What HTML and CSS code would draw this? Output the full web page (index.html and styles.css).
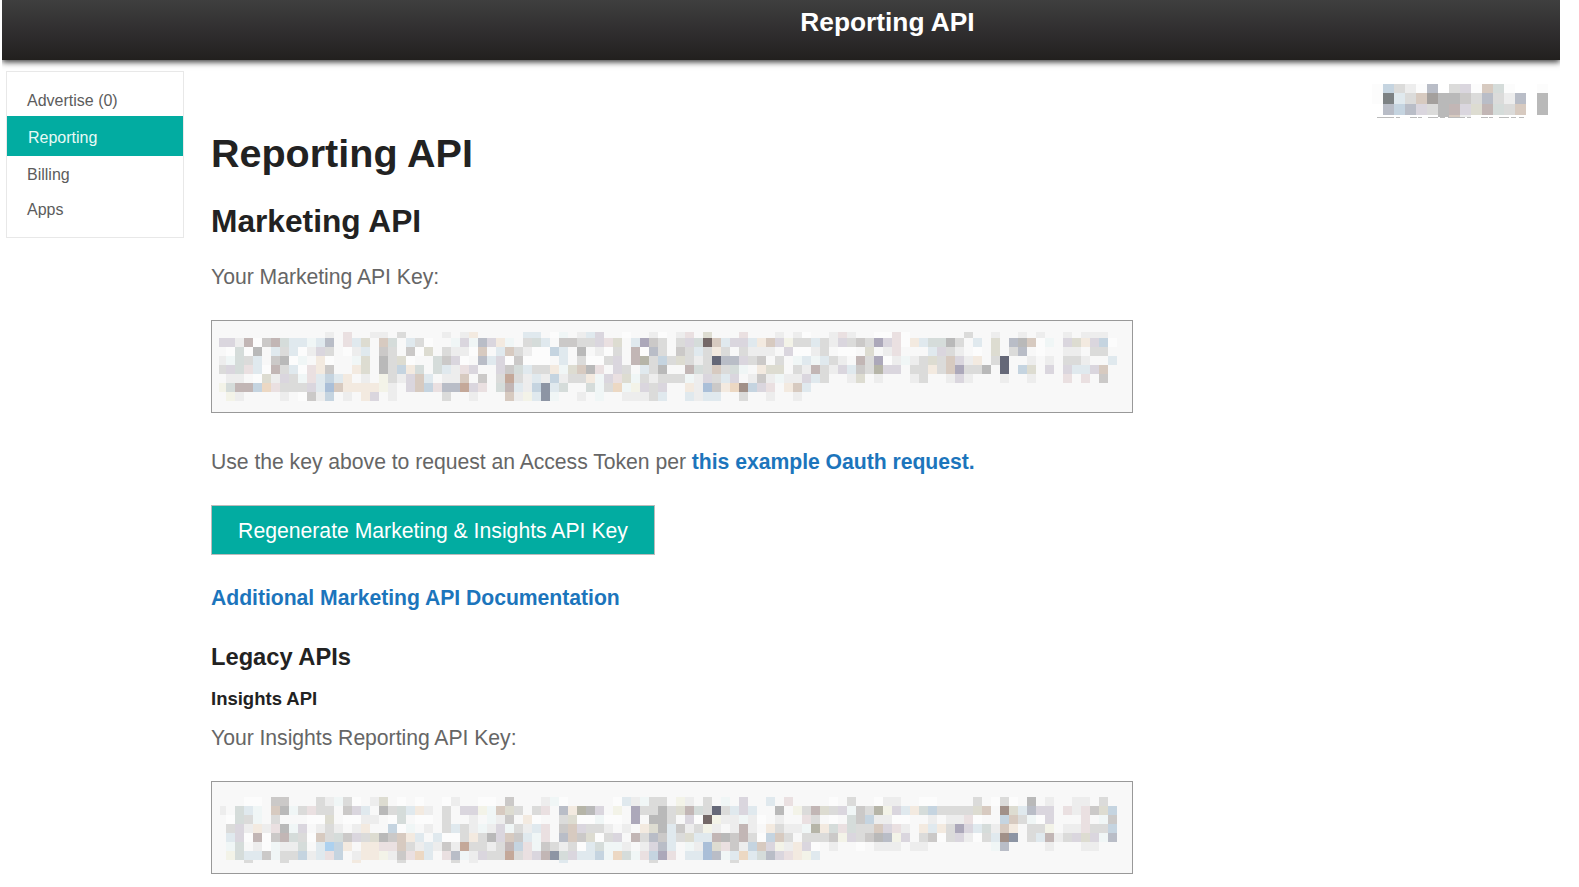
FILE: index.html
```html
<!DOCTYPE html>
<html lang="en">
<head>
<meta charset="utf-8">
<title>Reporting API</title>
<link rel="stylesheet" href="styles.css">
</head>
<body>
<header class="topbar"><span class="topbar-title">Reporting API</span></header>
<div class="page">
  <nav class="sidebar">
    <a class="nav-item">Advertise (0)</a>
    <a class="nav-item active">Reporting</a>
    <a class="nav-item">Billing</a>
    <a class="nav-item">Apps</a>
  </nav>
  <main class="content">
    <h1 class="title">Reporting API</h1>
    <h2 class="section">Marketing API</h2>
    <p class="text key-label">Your Marketing API Key:</p>
    <div class="key-box"><svg class="mask" id="marketing-key" width="920" height="91"></svg></div>
    <p class="text hint">Use the key above to request an Access Token per <a class="link">this example Oauth request.</a></p>
    <button class="button">Regenerate Marketing &amp; Insights API Key</button>
    <p class="text docs"><a class="link">Additional Marketing API Documentation</a></p>
    <h3 class="legacy">Legacy APIs</h3>
    <h4 class="insights">Insights API</h4>
    <p class="text insights-label">Your Insights Reporting API Key:</p>
    <div class="key-box"><svg class="mask" id="insights-key" width="920" height="91"></svg></div>
  </main>
  <div class="account"><svg class="mask" id="account-name" width="180" height="36"></svg></div>
</div>
<script src="mosaic.js"></script>
</body>
</html>
```
FILE: styles.css
```css
* { box-sizing: border-box; }
body {
  margin: 0;
  height: 887px;
  overflow: hidden;
  background: #fff;
  color: #222;
  font-family: "Liberation Sans", Arial, sans-serif;
}
h1, h2, h3, h4, p { margin: 0; white-space: nowrap; }
.topbar {
  width: 1558px;
  height: 60px;
  margin-left: 2px;
  padding-left: 213px;
  display: flex;
  justify-content: center;
  background: linear-gradient(#3f3f3f, #2c2a2b 65%, #22201e);
  box-shadow: 0 2px 6px rgba(0, 0, 0, 0.8);
  clip-path: inset(0 0 -12px 0);
}
.topbar-title {
  color: #fff;
  font-size: 26.3px;
  font-weight: bold;
  line-height: 44px;
}
.page { display: flex; align-items: flex-start; }
.sidebar {
  width: 178px;
  height: 167px;
  margin: 11px 27px 0 6px;
  padding-top: 11px;
  border: 1px solid #e8e8e8;
  display: flex;
  flex-direction: column;
}
.nav-item {
  padding-left: 20px;
  font-size: 16px;
  line-height: 35px;
  color: #5c5c5c;
}
.nav-item:first-child { height: 33px; line-height: 36px; }
.nav-item.active {
  height: 40px;
  margin-bottom: 1px;
  padding-left: 21px;
  line-height: 43px;
  color: #e8faf6;
  background: #02aca1;
}
.content { width: 922px; }
.title { margin-top: 69px; font-size: 39.5px; line-height: 48px; }
.section { margin-top: 24px; font-size: 31.7px; line-height: 40px; }
.text {
  font-size: 21.2px;
  letter-spacing: -0.035px;
  line-height: 30px;
  color: #666;
}
.key-label { margin-top: 21px; margin-bottom: 28px; }
.key-box {
  height: 93px;
  background: #f8f8f8;
  border: 1px solid #999;
}
.mask { display: block; }
.hint { margin-top: 34px; }
.link { color: #1c75bc; font-weight: bold; }
.button {
  display: block;
  width: 444px;
  height: 50px;
  margin-top: 28px;
  padding: 1px 0 0;
  border: 1px solid #bbb;
  background: #02aca1;
  color: #fff;
  font-family: inherit;
  font-size: 21.2px;
  line-height: 47px;
  white-space: nowrap;
}
.docs { margin-top: 28px; }
.legacy { margin-top: 29px; font-size: 23.7px; line-height: 30px; }
.insights { margin-top: 13px; font-size: 18.5px; line-height: 28px; }
.insights-label { margin-top: 10px; margin-bottom: 28px; }
.account { margin-left: 236px; padding-top: 24px; }
```
FILE: mosaic.js
```js
// Pixelated masks that cover the private values.
const palette = {
  w: "#fcfcfc", a: "#ededed", b: "#dbdbda", c: "#cbc9c8", d: "#b9b9b9",
  e: "#dad6de", f: "#eae0e1", g: "#d5dcda", h: "#e0e9ee", i: "#c5d4e0",
  j: "#f3eae0", k: "#d7cac0", l: "#c2b6b5", m: "#b9bdc7", n: "#aca8ba",
  o: "#f3f3e8", p: "#c4a899", q: "#746867", r: "#656878", s: "#8d95a4",
  t: "#aabfd8", u: "#f0f6f6", v: "#a19088", x: "#dddcd1", y: "#b6b5a8",
  z: "#ecd8c3", D: "#7d8284", E: "#a4a09d", 1: "#add1ef"
};

function mosaic(id, rows, x0, edges, size, clipX) {
  const svg = document.getElementById(id);
  rows.forEach((row, r) => {
    [...row.replace(/ /g, "")].forEach((ch, c) => {
      if (ch === ".") return;
      const x = Math.max(x0 + c * size, clipX);
      const rect = document.createElementNS("http://www.w3.org/2000/svg", "rect");
      rect.setAttribute("x", x);
      rect.setAttribute("y", edges[r]);
      rect.setAttribute("width", x0 + (c + 1) * size - x);
      rect.setAttribute("height", edges[r + 1] - edges[r]);
      rect.setAttribute("fill", palette[ch]);
      rect.setAttribute("shape-rendering", "crispEdges");
      svg.appendChild(rect);
    });
  });
}

mosaic("marketing-key", [
  "............a.f..aa.b....a.aj.... .hh.wu.ahe..w..aw.af.x...f...a.aw. .afa..wwfw......b..a..a.a..a.aaa.",
  "eealwclghhuhm.fhx.kg.hbw..ueumeju .bgh.ccbbefx.hncb.begqkheehjkeobbh baebcbnefwjhggdb.h.x.mdkwu.exjeiw",
  ".wgwd.hbhwaeb.wah.cb.cwx.baawk.hk bawwih.d.awb.lwmb.cbhbjb.baaa.ewwa b.ww.x.af...heba.w.x.bm.w..aa.bb.",
  "augbh.cdwu.jw..ux.dbxw..gcew.mhew cwww.h.bwwbe.lybibxbabrmmebc.b.uhu hba.lbnwauabxbkeaj.br..a.a.bba..h",
  "begfhwlbhwfjc..jx.dbijg.ghafe..ec ghbbjuxkdf.eb.hbd..lgbkbgu.jxx.bal baehcbyee.bbjbknbbd.r.ix.e.ehhek.",
  ".aa.wxaebufhihj.a.obaekh.aak.c.bp bahaiabbjuefxubabbbuaebhe.acauaaeh b..ax.a...ab..aea...a..a...f.f.c.",
  "ogllizfbbbehtkjjjjoa.ekifmmpef.gl haishg..gubzuoebe..jatcjzvief.jkh.",
  ".oa....a.wcai.a.je.a.....b..a...k aohsu..a.u..aaabh..hahh..b..a..a.."
], 5, [11, 17, 26, 35, 44, 53, 62, 71, 80], 9, 7);

mosaic("insights-key", [
  "...ww.cc...baubw.ax.w.w..wa..ww.c ...auw.....whaubb.oa.b.u.e..h.f... .w.b..waa..ww....b.wbw.d.a..aa.b.",
  "a.ghu.kdubfbb.ceh.dbghja.b.eeoukx b.bf.mjyde.o.nbbdbxlgbrbheh..d.obl xbeucbyoehjgibbbbxk.vxhmee.fafcxi",
  ".wgbu.b...wwx.wwaa.wg.ww.b..a.uac .jw..bxwwuww.n.ddb.ewqoaauaw.a..fb .w.gciaaww..a.aafw..ikbuwe...f.uc",
  ".beajafdue.aba.aj..iwu.a.bhbauaeu bahf.ckebba.a.jxdhcaboa.ala.jbaauy jgfgbbkefa.jhjbnehgakj.bbo.aafbbi",
  ".hewlwclgbwkbgcebxdckjh.hwwbjbdek chuf.mkcxwbe.lbmchbxhhldclbwikb.bb bcoebcdmoe.bcwbeawbhvs.bhlabexeum",
  ".ug.awuaag.h1ij.jjffkbahacapbbabl ifucbabwhguua.aemh.uatxfcaikeoajew .a..w.aaa.aa.......um....a...aa..",
  ".oghhcubbiahfi.ajjoacfzh.fmuaebbp bfelsgehhiuzgufinf.hhtmuhzhgmefjoh",
  "...b...b.......j....b.....b.a.... .....h.........b........b........."
], 5, [15, 24, 33, 42, 51, 60, 69, 78, 81], 9, 8);

mosaic("account-name", [
  "wibawm.bewkgw..w",
  "wDhbkEddcbmbam.d",
  ".mimebdlexlgbk.d",
  "......dka......."
], 3, [0, 9, 20, 31, 33], 11, 3);

// Faint dotted underline below the account name.
const line = document.createElementNS("http://www.w3.org/2000/svg", "path");
line.setAttribute("d", "M8 33.5H155");
line.setAttribute("stroke", "#bbb");
line.setAttribute("stroke-dasharray", "17 2 4 10 7 1 4 6 10 2 5 3");
document.getElementById("account-name").appendChild(line);
```
